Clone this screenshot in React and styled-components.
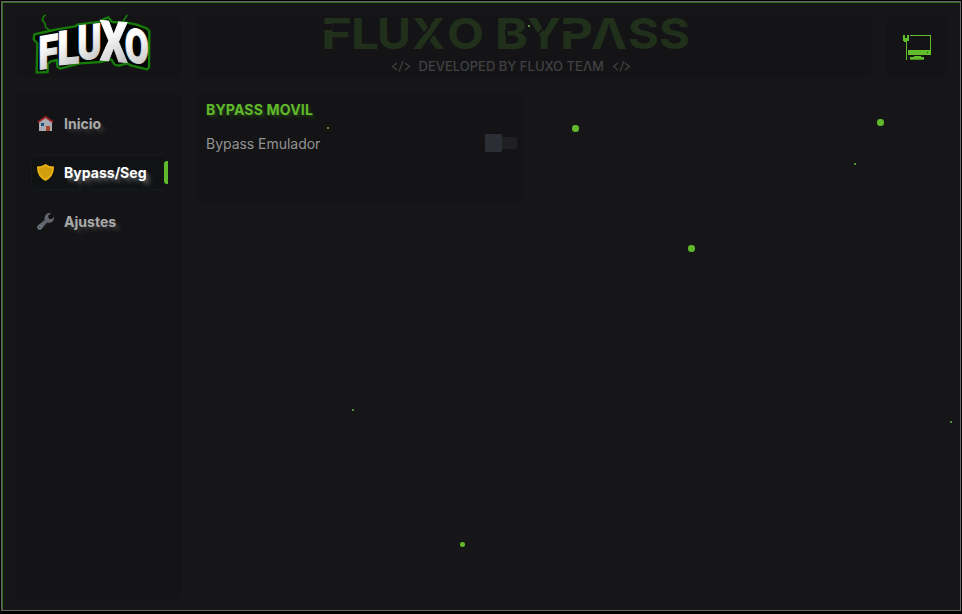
import React from 'react';
import styled, { createGlobalStyle } from 'styled-components';

const Global = createGlobalStyle`
  * { box-sizing: border-box; }
  html, body { margin: 0; background: #000; overflow: hidden; }
  h1, h2, p { margin: 0; font-weight: inherit; }
  button { font: inherit; color: inherit; }
`;

const Frame = styled.div`
  width: 962px;
  height: 614px;
  padding: 1px 1px 3px;
  background: #000;
  font-family: Inter, sans-serif;
`;

const Window = styled.div`
  position: relative;
  height: 610px;
  padding: 14px 12px 11px 14px;
  display: grid;
  grid-template-columns: 166px 1fr;
  grid-template-rows: 62px 1fr;
  gap: 14px;
  background: #161618;
  border: 1px solid #646464;
  box-shadow: inset 1px 1px 0 #35691f;
`;

const Panel = styled.section`
  background: #141416;
  border-radius: 8px;
`;

const ArtPanel = styled(Panel)`
  svg { display: block; overflow: visible; }
`;

const Header = styled.header`
  display: grid;
  grid-template-columns: 676px 62px;
  gap: 14px;
`;

const DevicePanel = styled(Panel)`
  display: flex;
  padding: 19px 0 0 17px;
`;

const Sidebar = styled(Panel).attrs({ as: 'nav' })`
  display: flex;
  flex-direction: column;
  gap: 14px;
  padding: 14px 14px 0 15px;
`;

const NavItem = styled.button`
  height: 35px;
  flex: none;
  display: flex;
  align-items: center;
  gap: 10px;
  padding: 0 0 0 5px;
  border: 1px solid ${p => (p.$active ? '#171a1b' : 'transparent')};
  border-radius: 6px;
  background: ${p => (p.$active ? '#101214' : 'transparent')};
  color: ${p => (p.$active ? '#fff' : '#a9a9a9')};
  font-size: 14px;
  font-weight: 700;
  letter-spacing: 0.03px;
  text-align: left;
  text-shadow: 1px 1px 2px ${p => p.$glow}, 3px 3px 3px ${p => p.$glow}, 5px 5px 4px ${p => p.$glow};
  svg { flex: none; }
`;

const ActiveBar = styled.span`
  width: 4px;
  height: 23px;
  margin-left: auto;
  margin-right: -1px;
  border-radius: 3px 0 0 3px;
  background: #5fb92b;
`;

const Card = styled(Panel)`
  width: 329px;
  height: 111px;
  padding: 9px 8px 0 10px;
`;

const CardTitle = styled.h2`
  font-size: 14px;
  line-height: 18px;
  font-weight: 700;
  letter-spacing: 0.18px;
  color: #5fb92b;
  text-shadow: 1px 1px 2px #5fb92b30, 3px 3px 3px #5fb92b1c, 5px 5px 4px #5fb92b10;
`;

const SettingRow = styled.div`
  display: flex;
  align-items: center;
  justify-content: space-between;
  height: 20px;
  margin-top: 14px;
  color: #929292;
  font-size: 14px;
  letter-spacing: -0.03px;
`;

const Toggle = styled.span`
  display: flex;
  align-items: center;
  width: 32px;
  height: 12px;
  border-radius: 2px;
  background: #202022;
`;

const Knob = styled.span`
  width: 17px;
  height: 18px;
  border-radius: 1px;
  background: #2c2e36;
`;

const Particle = styled.i`
  position: absolute;
  left: ${p => p.$x - 2 - p.$size / 2}px;
  top: ${p => p.$y - 2 - p.$size / 2}px;
  width: ${p => p.$size}px;
  height: ${p => p.$size}px;
  border-radius: 50%;
  background: ${p => (p.$size < 3 ? '#6db83a' : '#5fb92b')};
`;

const particles = [
  [529, 26, 2], [328, 128.3, 2.3], [575.3, 128.3, 6.5], [880.5, 122.3, 6.5],
  [855.3, 164.3, 2], [691.3, 248.7, 6.5], [353, 410, 2], [462.3, 544.4, 4.5], [951.3, 422, 2],
];

const logoLetters = [
  { c: 'F', x: 115, y: 209, w: 60, h: 99, skew: -9 },
  { c: 'L', x: 172, y: 196, w: 66, h: 101, skew: -6 },
  { c: 'U', x: 232, y: 181, w: 73, h: 103, skew: -6 },
  { c: 'X', x: 300, y: 180, w: 82, h: 119, skew: 5 },
  { c: 'O', x: 374, y: 182, w: 72, h: 101, skew: 10 },
];

function Logo() {
  return (
    <svg width="166" height="62" viewBox="48 48 498 186" role="img" aria-label="FLUXO">
      <defs>
        <linearGradient id="steel" x1="0" y1="0" x2="0.3" y2="1">
          <stop offset="0.4" stopColor="#fff" />
          <stop offset="1" stopColor="#c4c4c4" />
        </linearGradient>
      </defs>
      <g fill="none" stroke="#167c09" strokeWidth="7">
        <path d="M150 92L137 82L135 70L127 61L130 50L137 45M367 70L374 56L382 45" strokeWidth="5" />
        <path fill="#030503" strokeLinejoin="round" d="M103 103L135 96L170 88L226 79L235 73L302 65L309 58L325 52L336 66L380 68L410 74L440 85L448 93L447 203L441 208L395 197L380 190L357 197L344 194L334 178L300 186L240 190L180 206L172 200L171 180L152 184L143 193L143 216L110 218L112 130L101 118Z" />
      </g>
      <g fontFamily="Roboto, sans-serif" fontWeight="900" fill="url(#steel)" stroke="url(#steel)" strokeWidth="3">
        {logoLetters.map(l => (
          <text key={l.c} transform={`translate(${l.x} ${l.y}) skewY(${l.skew})`} fontSize={l.h / 0.711}
            textLength={l.w} lengthAdjust="spacingAndGlyphs">{l.c}</text>
        ))}
      </g>
    </svg>
  );
}

const titleLetters = [
  ['F', 321, 31], ['L', 351, 28], ['U', 377, 34], ['X', 412, 33], ['O', 447, 37],
  ['B', 495, 33], ['Y', 527, 34], ['P', 560, 33], ['Λ', 591, 36], ['S', 628, 31], ['S', 659, 31],
];

function Title() {
  return (
    <svg width="676" height="62" viewBox="196 16 676 62" role="img" aria-label="FLUXO BYPASS, DEVELOPED BY FLUXO TEAM">
      <g fontFamily="Inter, sans-serif" fontWeight="700" fontSize="43" fill="#20301a">
        {titleLetters.map(([c, x, w]) => (
          <text key={x} x={x} y="49" textLength={w} lengthAdjust="spacingAndGlyphs">{c}</text>
        ))}
      </g>
      <path d="M322 24H332V30H322ZM562 24H572.500V31H562ZM505 29.500H507.500V36H505Z" fill="#141416" />
      <path d="M423 35L430 26M428 41L434 33M536 37L543 28" stroke="#141416" strokeWidth="1.800" />
      <g fill="#414142" fontFamily="Inter, sans-serif" fontSize="12.5" fontWeight="500">
        <text x="418.500" y="71" textLength="185.500" lengthAdjust="spacingAndGlyphs">DEVELOPED BY FLUXO TEΛM</text>
      </g>
      <path d="M397 63L392.500 66.500L397 70M405 63L409.500 66.500L405 70M403 61L399 71.500M618 63L613.500 66.500L618 70M625 63L629.500 66.500L625 70M624 61L620 71.500" fill="none" stroke="#414142" strokeWidth="1.200" />
    </svg>
  );
}

function DeviceIcon() {
  return (
    <svg width="28" height="26" viewBox="0 0 28 26" shapeRendering="crispEdges">
      <g fill="#62bd2b">
        <path d="M0 0H2V3H4V0H6V6H4V25H3V7H1V6H0Z" />
        <path d="M7 0H28V20H5V15H27V1H7Z" />
        <path d="M11 21H18V22H21V25H7V22H11Z" />
      </g>
      <path d="M24 17H25V18H24Z" fill="#173a0b" />
      <path d="M7 24H21V25H7Z" fill="#438b20" />
    </svg>
  );
}

function HouseIcon() {
  return (
    <svg width="17" height="17" viewBox="0 0 17 17">
      <path d="M2 7L8.500 2L15 7V16H2Z" fill="#a9aab2" />
      <path d="M1 7.300L8.500 2L16 7.300" fill="none" stroke="#9b2626" strokeWidth="2" />
      <path d="M4 8H7V11H4Z" fill="#17527c" />
      <path d="M9 11H13V16H9Z" fill="#a4452a" />
    </svg>
  );
}

function ShieldIcon() {
  return (
    <svg width="17" height="17" viewBox="0 0 17 17">
      <path d="M8.500 0Q12 2.500 17 2.500Q17.300 13 8.500 17Q-0.300 13 0 2.500Q5 2.500 8.500 0Z" fill="#e8b312" />
      <path d="M8.500 2Q11.500 4 15 4Q15 12 8.500 15Q2 12 2 4Q5.500 4 8.500 2Z" fill="#d29e0e" />
    </svg>
  );
}

function WrenchIcon() {
  return (
    <svg width="17" height="17" viewBox="0 0 17 17">
      <path d="M14 0L11 3L12 6L15 6L17 4Q17.500 8 14 9.500Q12 10.300 10 9.500L5 15.500Q3.500 17.500 1.200 16.400Q-1 14.500 1 12.300L7.700 7Q7 3.500 9 1.500Q11-0.500 14 0Z" fill="#62666c" />
      <circle cx="2.800" cy="14.300" r="1.500" fill="#25415a" stroke="#929aa2" strokeWidth="0.800" />
    </svg>
  );
}

export default function App() {
  return (
    <>
      <Global />
      <Frame>
        <Window>
          <ArtPanel><Logo /></ArtPanel>
          <Header>
            <ArtPanel><Title /></ArtPanel>
            <DevicePanel><DeviceIcon /></DevicePanel>
          </Header>
          <Sidebar>
            <NavItem $glow="#a9a9a91c"><HouseIcon />Inicio</NavItem>
            <NavItem $active $glow="#ffffff24"><ShieldIcon />Bypass/Seg<ActiveBar /></NavItem>
            <NavItem $glow="#a9a9a91c"><WrenchIcon />Ajustes</NavItem>
          </Sidebar>
          <main>
            <Card>
              <CardTitle>BYPASS MOVIL</CardTitle>
              <SettingRow>
                Bypass Emulador
                <Toggle role="switch" aria-checked="false" aria-label="Bypass Emulador"><Knob /></Toggle>
              </SettingRow>
            </Card>
          </main>
          {particles.map(([x, y, size]) => <Particle key={`${x}-${y}`} $x={x} $y={y} $size={size} />)}
        </Window>
      </Frame>
    </>
  );
}
